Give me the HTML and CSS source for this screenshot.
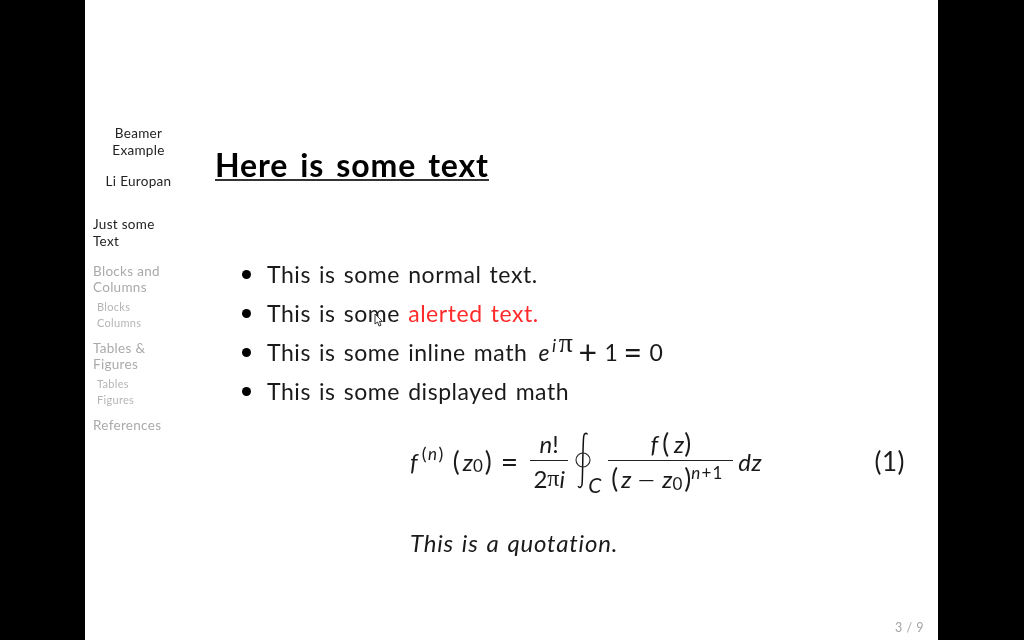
FILE: index.html
```html
<!DOCTYPE html>
<html lang="en">
<head>
    <meta charset="UTF-8">
    <meta name="viewport" content="width=device-width, initial-scale=1.0">
    <title>Beamer Example</title>
    <link rel="stylesheet" href="styles.css">
</head>
<body>
    <div class="slide">
        <aside class="sidebar">
            <div class="deck-title">Beamer<br>Example</div>
            <div class="deck-author">Li Europan</div>
            <nav class="toc">
                <a class="toc-section current">Just some<br>Text</a>
                <a class="toc-section">Blocks and<br>Columns</a>
                <a class="toc-sub">Blocks</a>
                <a class="toc-sub">Columns</a>
                <a class="toc-section">Tables &amp;<br>Figures</a>
                <a class="toc-sub">Tables</a>
                <a class="toc-sub">Figures</a>
                <a class="toc-section">References</a>
            </nav>
        </aside>

        <main class="content">
            <h1 class="frame-title">Here is some text</h1>
            <ul class="items">
                <li>This is some normal text.</li>
                <li>This is some <span class="alert">alerted text.</span></li>
                <li>This is some inline math <span class="math"><i>e</i><sup><i>i</i><span class="pi">π</span></sup><span class="op">+</span><span class="num">1</span><span class="op">=</span><span class="num">0</span></span></li>
                <li>This is some displayed math</li>
            </ul>

            <div class="equation">
                <div class="formula">
                    <i class="f">f</i>
                    <sup class="order"><span class="paren">(</span><i>n</i><span class="paren">)</span></sup>
                    <span class="paren">(</span><i class="z">z</i><sub>0</sub><span class="paren">)</span>
                    <span class="op equals">=</span>
                    <span class="frac first">
                        <span class="top"><i>n</i>!</span>
                        <span class="bottom">2<span class="pi">π</span><i>i</i></span>
                    </span>
                    <svg class="integral" width="18" height="60" viewBox="0 0 18 60" aria-hidden="true">
                        <path d="M13.500 3.500c-1.200-2.200-3.400-1.200-3.800 2-.9 7-1 40-1.600 47.500-.3 3.400-2.600 4.600-4 2.200" fill="none" stroke="#111" stroke-width="1.500"/>
                        <circle cx="9" cy="29" r="7" fill="none" stroke="#222" stroke-width="1.100"/>
                    </svg>
                    <i class="limit">C</i>
                    <span class="frac second">
                        <span class="top"><i>f</i><span class="paren gap">(</span><i class="z">z</i><span class="paren">)</span></span>
                        <span class="bottom"><span class="paren">(</span><i class="z">z</i><span class="op minus">−</span><i class="z">z</i><sub>0</sub><span class="paren">)</span><sup><i>n</i>+1</sup></span>
                    </span>
                    <i class="dz">dz</i>
                </div>
                <span class="eq-number">(1)</span>
            </div>

            <p class="quote">This is a quotation.</p>

            <div class="page-number">3 / 9</div>
        </main>

        <svg class="cursor" width="10" height="15" viewBox="0 0 10 15" aria-hidden="true">
            <path d="M1 1v10l2.500-2 1.500 4 2-.8-1.600-3.800H8.500z" fill="#fff" stroke="#333" stroke-width="1"/>
        </svg>
    </div>
</body>
</html>
```

FILE: styles.css
```css
* {
    box-sizing: border-box;
    margin: 0;
    padding: 0;
}

body {
    background: #000;
    font-family: Lato, "Open Sans", sans-serif;
    color: #1a1a1a;
    height: 640px;
    overflow: hidden;
}

/* the source is a slightly soft video frame */
.slide {
    position: relative;
    display: flex;
    width: 853px;
    height: 640px;
    margin-left: 85px;
    background: #fff;
    filter: blur(0.35px);
}

/* sidebar */
.sidebar {
    width: 130px;
    flex-shrink: 0;
    padding: 125px 0 0 8px;
    font-size: 13.5px;
    line-height: 16.5px;
    letter-spacing: 0.3px;
    color: #222;
}

.deck-title,
.deck-author {
    width: 91px;
    text-align: center;
}

.deck-author {
    margin-top: 14.500px;
}

.toc {
    display: flex;
    flex-direction: column;
    margin-top: 27px;
}

.toc-section {
    margin-bottom: 13.5px;
    color: #aaa;
}

.toc-section.current {
    color: #222;
}

.toc-sub {
    margin: -10.500px 0 9px 4px;
    font-size: 11px;
    line-height: 16px;
    color: #b5b5b5;
}

.toc-sub + .toc-sub {
    margin-top: -9px;
}

/* main column */
.content {
    flex: 1;
    display: flex;
    flex-direction: column;
    padding: 151px 14px 0 0;
}

.frame-title {
    align-self: flex-start;
    font-size: 32px;
    line-height: 28px;
    font-weight: 700;
    letter-spacing: 0.85px;
    word-spacing: 3.500px;
    color: #000;
    border-bottom: 2px solid #333;
}

.items {
    list-style: none;
    margin-top: 74px;
    font-size: 23px;
    line-height: 39px;
    letter-spacing: 0.55px;
    word-spacing: 1.700px;
}

.items li {
    position: relative;
    padding-left: 52px;
}

.items li::before {
    content: "";
    position: absolute;
    left: 27px;
    top: 15px;
    width: 9px;
    height: 9px;
    border-radius: 50%;
    background: #000;
}

.alert {
    color: #ff2a2a;
}

.math {
    margin-left: 3px;
}

.math sup {
    font-size: 18px;
    line-height: 0;
    vertical-align: 9px;
    margin: 0 0 0 2px;
}

.math .pi {
    font-size: 28px;
    line-height: 0;
    margin-left: 2px;
}

.math .op {
    font-size: 32px;
    line-height: 0;
    margin: 0 7px 0 5px;
    vertical-align: -3px;
}

.pi {
    font-family: "Liberation Serif", serif;
}

/* displayed equation */
.equation {
    display: flex;
    align-items: center;
    justify-content: space-between;
    margin: 14px 19px 0 195px;
    height: 72px;
    font-size: 24px;
}

.formula {
    display: flex;
    align-items: center;
    white-space: nowrap;
}

.formula sup,
.formula sub {
    font-size: 17px;
    line-height: 0;
}

.formula .paren {
    font-size: 26px;
}

.order {
    margin: -15px 8px 0 4px;
    letter-spacing: 1.500px;
}

.order .paren {
    font-size: 18px;
}

.formula sub {
    position: relative;
    top: 5px;
    margin-right: 2px;
}

.z {
    margin-left: 3px;
}

.equals {
    font-size: 30px;
    margin: 0 12px 0 9px;
}

.frac {
    display: inline-flex;
    flex-direction: column;
    align-items: center;
    line-height: 33px;
}

.frac .top,
.frac .bottom {
    display: flex;
    align-items: center;
    justify-content: center;
    width: 100%;
    height: 35px;
}

.frac .top {
    border-bottom: 1px solid #222;
}

.frac .bottom {
    justify-content: flex-start;
    padding-left: 3px;
}

.frac.first .bottom {
    justify-content: center;
    padding-left: 0;
}

.frac .top .z {
    margin-left: 5px;
}

.frac .bottom sup {
    position: relative;
    top: -6px;
    letter-spacing: 1.200px;
}

.frac .bottom .z {
    margin-left: 3px;
}

.first {
    width: 38px;
}

.second {
    width: 125px;
}

.integral {
    margin-left: 6px;
}

.limit {
    align-self: flex-end;
    margin: 0 7px -1px -4px;
    font-size: 21px;
    line-height: 24px;
}

.paren.gap {
    margin-left: 4px;
}

.minus {
    font-size: 34px;
    font-weight: 300;
    line-height: 0;
    margin: 0 3px 0 5px;
}

.dz {
    margin-left: 5px;
    letter-spacing: 0.500px;
}

.eq-number {
    font-size: 26px;
    letter-spacing: 0.500px;
}

.quote {
    margin: 31px 0 0 195px;
    font-size: 24px;
    font-style: italic;
    line-height: 30px;
    letter-spacing: 0.800px;
    word-spacing: 1.500px;
}

.page-number {
    margin-top: auto;
    padding-bottom: 4px;
    text-align: right;
    font-size: 12.500px;
    line-height: 16px;
    letter-spacing: 0.500px;
    color: #a5a5a5;
}

/* mouse pointer from the recording */
.cursor {
    position: absolute;
    left: 289px;
    top: 313px;
}
```
